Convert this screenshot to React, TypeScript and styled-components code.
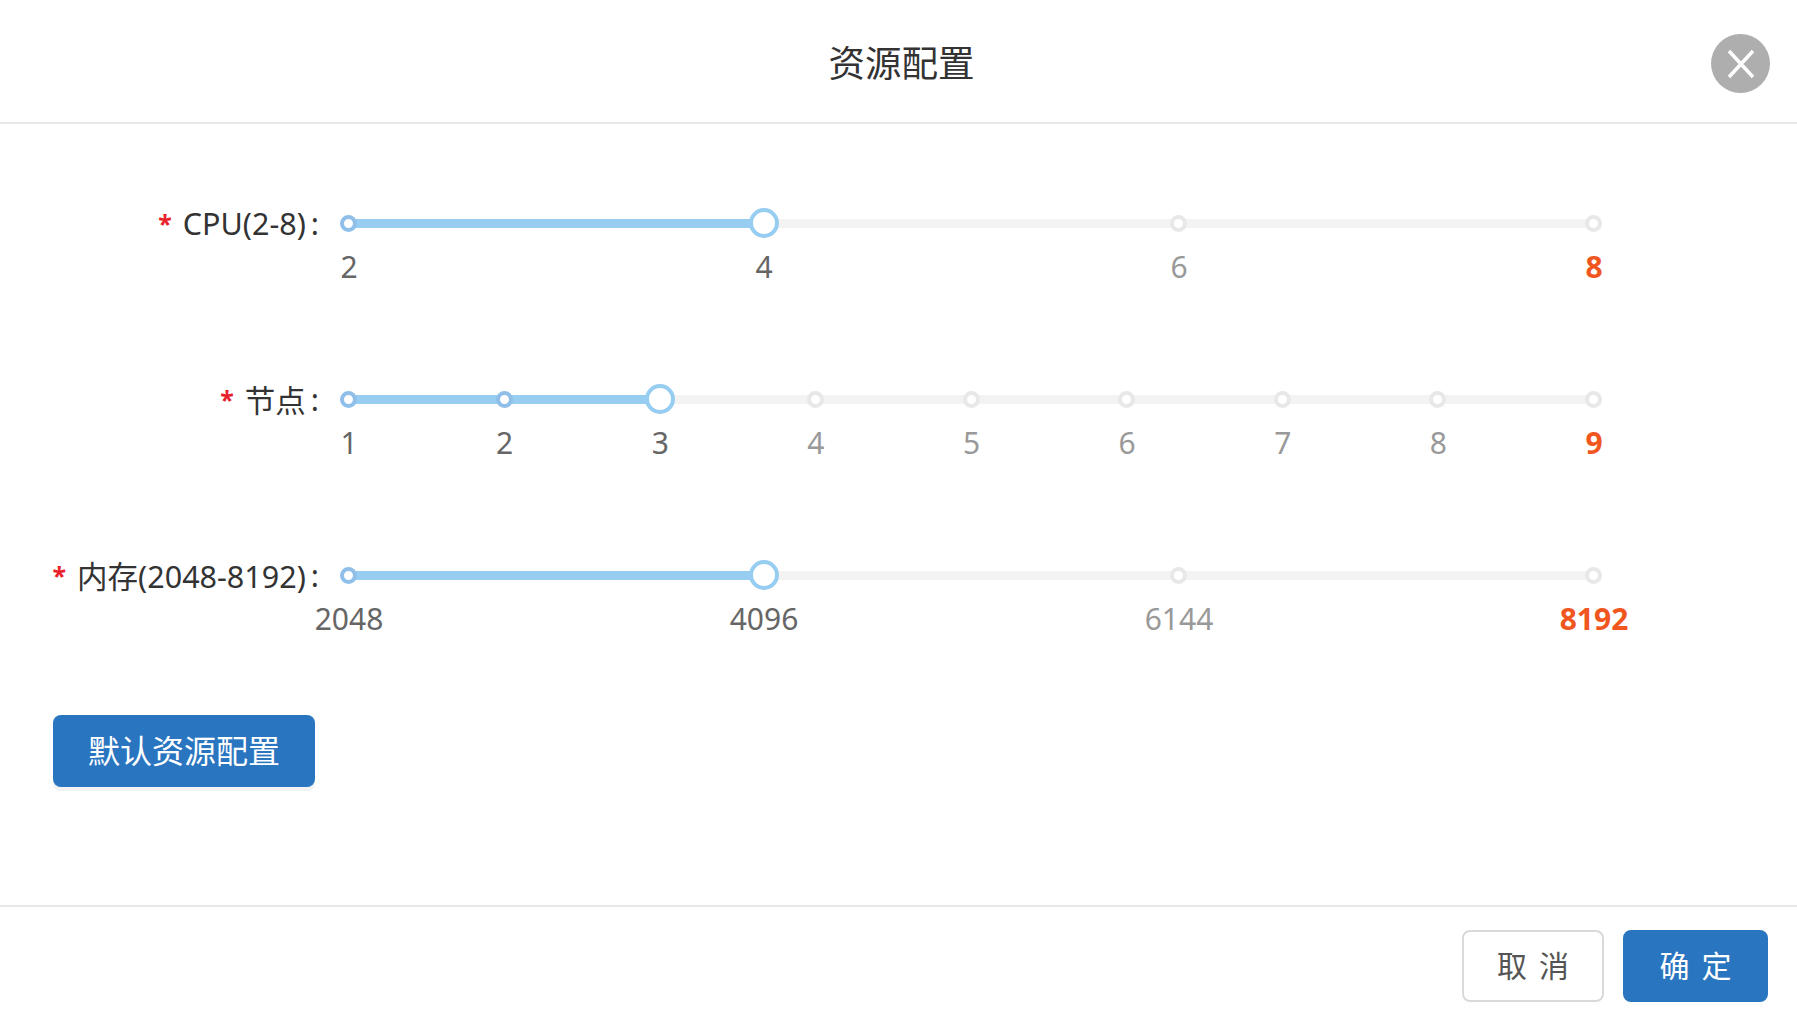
import React from "react";
import styled, { createGlobalStyle } from "styled-components";

const GlobalStyle = createGlobalStyle`
  html, body {
    margin: 0;
    padding: 0;
    background: #fff;
    font-family: "Noto Sans", "Noto Sans CJK SC", sans-serif;
  }
  * { box-sizing: border-box; }
`;

const Dialog = styled.div`
  display: flex;
  flex-direction: column;
  width: 100%;
  height: 1016px;
  overflow: hidden;
  background: #fff;
`;

const Header = styled.header`
  display: flex;
  align-items: center;
  justify-content: center;
  position: relative;
  height: 124px;
  padding-left: 6px;
  border-bottom: 2px solid #e8e8e8;
`;

const Title = styled.h1`
  margin: 0;
  font-size: 36.5px;
  font-weight: 400;
  color: #333;
`;

const CloseButton = styled.button`
  position: absolute;
  top: 34px;
  right: 27px;
  display: flex;
  align-items: center;
  justify-content: center;
  width: 59px;
  height: 59px;
  padding: 0;
  border: none;
  border-radius: 50%;
  background: #aeaeae;
`;

const Body = styled.main`
  flex: 1;
  padding: 99px 0 0 53px;
`;

const FormRow = styled.div`
  display: flex;
  height: 176px;

  &:last-of-type {
    height: 140px;
  }
`;

const Label = styled.label`
  display: flex;
  justify-content: flex-end;
  align-items: center;
  flex: none;
  width: 266px;
  height: 0;
  margin: 0 29px 0 0;
  font-size: 30.5px;
  color: #333;
  white-space: nowrap;
`;

const Required = styled.span`
  margin-right: 11px;
  color: #e8202a;
  font-size: 25px;
  font-weight: 700;
`;

const Colon = styled.span`
  margin-left: 5px;
`;

const SliderBox = styled.div`
  position: relative;
  width: 1245px;
  height: 0;
`;

const Rail = styled.div`
  position: absolute;
  left: 0;
  right: 0;
  top: -4px;
  height: 9px;
  background: #f3f3f3;
  border-radius: 5px;
`;

const Fill = styled.div`
  position: absolute;
  left: 0;
  top: -4px;
  height: 9px;
  background: #96cdf0;
`;

const Stops = styled.div`
  position: absolute;
  left: 0;
  right: 0;
  top: 0;
  display: flex;
  justify-content: space-between;
`;

const Stop = styled.div`
  position: relative;
  width: 0;
  height: 0;
`;

const Dot = styled.span<{ $on: boolean }>`
  position: absolute;
  left: -8px;
  top: -8px;
  width: 17px;
  height: 17px;
  border-radius: 50%;
  background: #fff;
  border: 4px solid ${(p) => (p.$on ? "#8fbfe8" : "#e8e8e8")};
`;

const Handle = styled.span`
  position: absolute;
  left: -14px;
  top: -15px;
  width: 30px;
  height: 30px;
  border-radius: 50%;
  background: #fff;
  border: 4px solid #96cdf0;
`;

const MarkText = styled.span<{ $on: boolean; $last: boolean }>`
  position: absolute;
  top: 24px;
  left: 1px;
  transform: translateX(-50%);
  font-size: 30px;
  line-height: 40px;
  white-space: nowrap;
  font-weight: ${(p) => (p.$last ? 700 : 400)};
  color: ${(p) => (p.$last ? "#f0561d" : p.$on ? "#666" : "#999")};
`;

const DefaultButton = styled.button`
  display: block;
  width: 262px;
  height: 72px;
  padding: 0 0 4px;
  border: none;
  border-radius: 8px;
  background: #2a75bf;
  box-shadow: 0 4px 0 #f2f2f2;
  color: #fff;
  font-family: inherit;
  font-size: 32px;
`;

const Footer = styled.footer`
  display: flex;
  justify-content: flex-end;
  gap: 19px;
  height: 111px;
  padding: 23px 29px 0 0;
  border-top: 2px solid #e8e8e8;
`;

const FooterButton = styled.button<{ $primary?: boolean }>`
  width: ${(p) => (p.$primary ? "145px" : "142px")};
  height: 72px;
  padding: 0 0 4px;
  border-radius: 8px;
  border: 2px solid ${(p) => (p.$primary ? "#2a75bf" : "#d9d9d9")};
  background: ${(p) => (p.$primary ? "#2a75bf" : "#fff")};
  color: ${(p) => (p.$primary ? "#fff" : "#555")};
  font-family: inherit;
  font-size: 30px;
  word-spacing: 4px;
`;

interface SliderData {
  label: string;
  marks: number[];
  value: number;
}

const sliders: SliderData[] = [
  { label: "CPU(2-8)", marks: [2, 4, 6, 8], value: 4 },
  { label: "节点", marks: [1, 2, 3, 4, 5, 6, 7, 8, 9], value: 3 },
  { label: "内存(2048-8192)", marks: [2048, 4096, 6144, 8192], value: 4096 },
];

const MarkSlider = ({ marks, value }: SliderData) => {
  const min = marks[0];
  const max = marks[marks.length - 1];
  return (
    <SliderBox>
      <Rail />
      <Fill style={{ width: `${((value - min) / (max - min)) * 100}%` }} />
      <Stops>
        {marks.map((m, i) => (
          <Stop key={m}>
            {m === value ? <Handle /> : <Dot $on={m < value} />}
            <MarkText $on={m <= value} $last={i === marks.length - 1}>
              {m}
            </MarkText>
          </Stop>
        ))}
      </Stops>
    </SliderBox>
  );
};

export default function App() {
  return (
    <Dialog>
      <GlobalStyle />
      <Header>
        <Title>资源配置</Title>
        <CloseButton aria-label="close">
          <svg width="30" height="30" viewBox="0 0 30 30">
            <path d="M3 2 L27 28 M27 2 L3 28" stroke="#fff" strokeWidth="3.5" fill="none" />
          </svg>
        </CloseButton>
      </Header>
      <Body>
        {sliders.map((s) => (
          <FormRow key={s.label}>
            <Label>
              <Required>*</Required>
              {s.label}
              <Colon>:</Colon>
            </Label>
            <MarkSlider {...s} />
          </FormRow>
        ))}
        <DefaultButton>默认资源配置</DefaultButton>
      </Body>
      <Footer>
        <FooterButton>取 消</FooterButton>
        <FooterButton $primary>确 定</FooterButton>
      </Footer>
    </Dialog>
  );
}
